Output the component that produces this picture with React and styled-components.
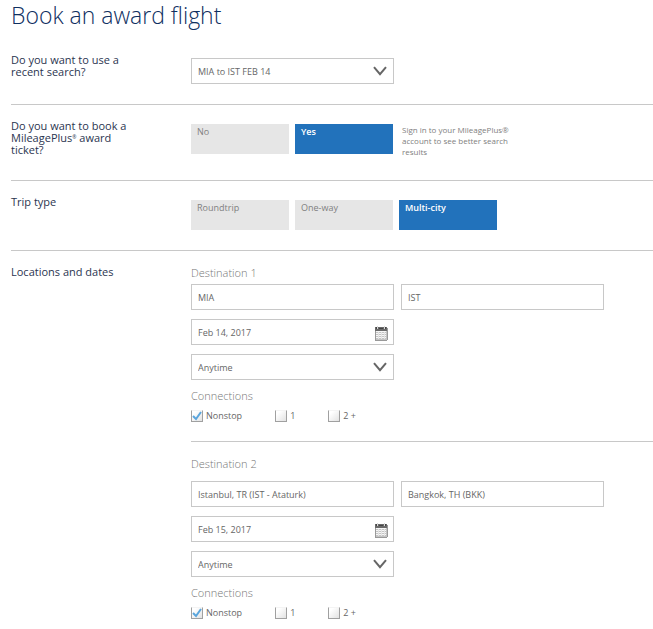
import React, { useState } from 'react';
import styled, { createGlobalStyle } from 'styled-components';

const GlobalStyle = createGlobalStyle`
  * {
    box-sizing: border-box;
  }

  body {
    margin: 0;
    background: #fff;
    color: #666;
    font-family: 'Open Sans', 'Liberation Sans', sans-serif;
    font-size: 9px;
  }

  input,
  select,
  button {
    font: inherit;
    color: inherit;
  }
`;

const Form = styled.form`
  padding-left: 11px;
`;

const Title = styled.h1`
  margin: 0;
  color: #0f2f5f;
  font-size: 23px;
  font-weight: 300;
  line-height: 30px;
  padding-bottom: 9px;
`;

const Row = styled.section`
  display: grid;
  grid-template-columns: 120px 1fr;
  column-gap: 60px;
  padding-top: 15px;
  border-bottom: ${({ $last }) => ($last ? 'none' : '1px solid #c8c8c8')};
`;

const RowLabel = styled.h2`
  margin: 0;
  color: #2b3550;
  font-size: 11px;
  font-weight: 400;
  line-height: 12px;
`;

const Mark = styled.span`
  font-size: 5px;
  line-height: 5px;
  vertical-align: 3px;
`;

const Controls = styled.div`
  display: flex;
  align-items: flex-start;
  gap: 6px;
  padding: 4px 0 20px;
`;

const Choice = styled.button`
  display: flex;
  align-items: flex-start;
  width: 98px;
  height: 30px;
  padding: 2px 6px;
  border: 0;
  line-height: 12px;
  background: ${({ $active }) => ($active ? '#2272bb' : '#e6e6e6')};
  color: ${({ $active }) => ($active ? '#fff' : '#808080')};
  font-weight: ${({ $active }) => ($active ? 600 : 400)};
  cursor: pointer;
`;

const Hint = styled.p`
  margin: 0;
  width: 120px;
  padding: 0 0 3px 3px;
  color: #808080;
  font-size: 8px;
  line-height: 11px;
`;

const FieldWrap = styled.div`
  position: relative;
  width: 203px;
`;

const Input = styled.input`
  display: block;
  width: 100%;
  height: 26px;
  padding: 0 6px;
  border: 1px solid #c8c8c8;
  border-radius: 0;
  background: #fff;
  color: #666;
`;

const Select = styled.select`
  display: block;
  width: 100%;
  height: 26px;
  padding: 0 6px;
  border: 1px solid #c8c8c8;
  border-radius: 0;
  background: #fff;
  appearance: none;
`;

const Chevron = styled.svg`
  position: absolute;
  top: 8px;
  right: 7px;
  width: 14px;
  height: 10px;
  pointer-events: none;
`;

const CalendarButton = styled.button`
  position: absolute;
  top: 6px;
  right: 6px;
  width: 14px;
  height: 16px;
  padding: 0;
  border: 0;
  background: none;
  cursor: pointer;

  svg {
    display: block;
  }
`;

const Leg = styled.fieldset`
  margin: 0;
  min-width: 0;
  border: 0;
  padding: ${({ $spaced }) => ($spaced ? '15px 0 9px' : '0 0 18px')};
  border-bottom: ${({ $spaced }) => ($spaced ? 'none' : '1px solid #c8c8c8')};
`;

const SubTitle = styled.h3`
  margin: 0;
  color: #777;
  font-size: 11px;
  font-weight: 300;
  line-height: 14px;
`;

const Fields = styled.div`
  display: flex;
  flex-direction: column;
  gap: 9px;
  padding: ${({ $spaced }) => ($spaced ? '10px 0 9px' : '4px 0 9px')};
`;

const Airports = styled.div`
  display: flex;
  gap: 7px;
`;

const Checks = styled.div`
  display: flex;
  gap: 33px;
  padding-top: 6px;
`;

const CheckLabel = styled.label`
  display: flex;
  align-items: center;
  gap: 3px;
  line-height: 14px;
  cursor: pointer;
`;

const CheckWrap = styled.span`
  position: relative;
  width: 12px;
  height: 12px;

  svg {
    position: absolute;
    top: 1px;
    left: 1px;
    display: none;
    pointer-events: none;
  }

  input:checked + svg {
    display: block;
  }
`;

const CheckBox = styled.input`
  appearance: none;
  display: block;
  width: 12px;
  height: 12px;
  margin: 0;
  border: 1px solid #a0a0a0;
  border-top-color: #f4f4f4;
  background: linear-gradient(135deg, #fff 20%, #e2e2e2);
`;

function Dropdown({ label, options }) {
  return (
    <FieldWrap>
      <Select aria-label={label}>
        {options.map((option) => (
          <option key={option}>{option}</option>
        ))}
      </Select>
      <Chevron viewBox="0 0 14 10" fill="none" stroke="#666" strokeWidth="2">
        <path d="M1 1.2 L7 8.2 L13 1.2" />
      </Chevron>
    </FieldWrap>
  );
}

function CalendarIcon() {
  return (
    <svg width="14" height="16" viewBox="0 0 14 16">
      <path fill="#c4c4c4" d="M1 6h12v9H1z" />
      <path fill="#6a6a6a" d="M1 2h12v4H1z" />
      <path fill="#d8d8d8" d="M3 1h1v3H3zM10 1h1v3h-1z" />
      <path fill="#444" d="M2 2h1v2H2zM11 2h1v2h-1zM5 3h4v1H5z" />
      <path stroke="#f6f6f6" d="M2 6.5h10M2 8.5h10M2 10.5h10M2 12.5h10" />
      <path stroke="#e4e4e4" d="M4.5 7v7M7.5 7v7M10.5 7v7" />
      <path stroke="#999" fill="none" d="M1.5 6v9M1 15.5h12M13.5 3v12" />
    </svg>
  );
}

function Choices({ options, initial, children }) {
  const [active, setActive] = useState(initial);

  return (
    <Controls>
      {options.map((option) => (
        <Choice
          key={option}
          type="button"
          $active={option === active}
          aria-pressed={option === active}
          onClick={() => setActive(option)}
        >
          {option}
        </Choice>
      ))}
      {children}
    </Controls>
  );
}

const legs = [
  { id: 1, from: 'MIA', to: 'IST', date: 'Feb 14, 2017' },
  { id: 2, from: 'Istanbul, TR (IST - Ataturk)', to: 'Bangkok, TH (BKK)', date: 'Feb 15, 2017' },
];

const connections = ['Nonstop', '1', '2 +'];

function Destination({ leg }) {
  const spaced = leg.id > 1;

  return (
    <Leg $spaced={spaced} aria-label={`Destination ${leg.id}`}>
      <SubTitle>Destination {leg.id}</SubTitle>
      <Fields $spaced={spaced}>
        <Airports>
          <FieldWrap>
            <Input aria-label="From" defaultValue={leg.from} />
          </FieldWrap>
          <FieldWrap>
            <Input aria-label="To" defaultValue={leg.to} />
          </FieldWrap>
        </Airports>
        <FieldWrap>
          <Input aria-label="Date" defaultValue={leg.date} />
          <CalendarButton type="button" aria-label="Open calendar">
            <CalendarIcon />
          </CalendarButton>
        </FieldWrap>
        <Dropdown label="Time" options={['Anytime']} />
      </Fields>
      <SubTitle>Connections</SubTitle>
      <Checks>
        {connections.map((name) => (
          <CheckLabel key={name}>
            <CheckWrap>
              <CheckBox type="checkbox" defaultChecked={name === 'Nonstop'} />
              <svg width="10" height="10" viewBox="0 0 10 10" fill="none" stroke="#5aa5dc" strokeWidth="2">
                <path d="M1 5 L4 8 L9 1" />
              </svg>
            </CheckWrap>
            {name}
          </CheckLabel>
        ))}
      </Checks>
    </Leg>
  );
}

function App() {
  return (
    <>
      <GlobalStyle />
      <Form>
        <Title>Book an award flight</Title>
        <Row>
          <RowLabel>Do you want to use a recent search?</RowLabel>
          <Controls>
            <Dropdown label="Recent search" options={['MIA to IST FEB 14']} />
          </Controls>
        </Row>
        <Row>
          <RowLabel>
            Do you want to book a MileagePlus<Mark>®</Mark> award ticket?
          </RowLabel>
          <Choices options={['No', 'Yes']} initial="Yes">
            <Hint>Sign in to your MileagePlus® account to see better search results</Hint>
          </Choices>
        </Row>
        <Row>
          <RowLabel>Trip type</RowLabel>
          <Choices options={['Roundtrip', 'One-way', 'Multi-city']} initial="Multi-city" />
        </Row>
        <Row $last>
          <RowLabel>Locations and dates</RowLabel>
          <div>
            {legs.map((leg) => (
              <Destination key={leg.id} leg={leg} />
            ))}
          </div>
        </Row>
      </Form>
    </>
  );
}

export default App;
